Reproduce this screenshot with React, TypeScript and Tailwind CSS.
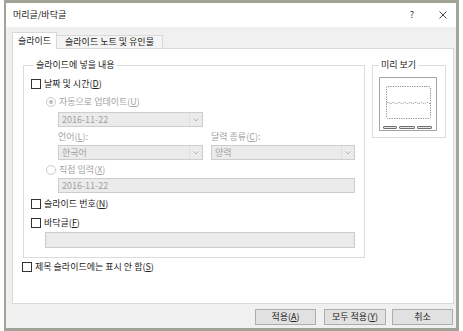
import React from "react";

// 머리글/바닥글 대화상자 (PowerPoint) 재현

function Mn({ k }: { k: string }) {
  return (
    <>
      (<u className="underline underline-offset-[1px]">{k}</u>)
    </>
  );
}

function Check({ label, k }: { label: string; k: string }) {
  return (
    <div className="flex h-[16px] items-center">
      <span className="h-[10px] w-[10px] shrink-0 border border-[#333333] bg-white" />
      <span className="ml-[3px] whitespace-nowrap text-[#222222]">
        {label}
        <Mn k={k} />
      </span>
    </div>
  );
}

function Radio({ label, k, checked }: { label: string; k: string; checked?: boolean }) {
  return (
    <div className="ml-[15px] flex h-[16px] items-center">
      <span className="flex h-[10px] w-[10px] shrink-0 items-center justify-center rounded-full border border-[#cbcbcb] bg-white">
        {checked && <span className="h-[4px] w-[4px] rounded-full bg-[#bdbdbd]" />}
      </span>
      <span className="ml-[3px] whitespace-nowrap text-[#a3a3a3]">
        {label}
        <Mn k={k} />
      </span>
    </div>
  );
}

function Chevron() {
  return (
    <svg width="6" height="4" viewBox="0 0 6 4">
      <path d="M0.5 0.5 L3 3 L5.5 0.5" fill="none" stroke="#b5b5b5" strokeWidth="1" />
    </svg>
  );
}

function Combo({ value, width }: { value: string; width: string }) {
  return (
    <div className={`flex h-[15px] ${width} border border-[#cdcdcd] bg-[#ebebeb] text-[#a3a3a3]`}>
      <span className="flex-1 pl-[3px] leading-[13px]">{value}</span>
      <span className="flex w-[13px] items-center justify-center border-l border-[#dedede]">
        <Chevron />
      </span>
    </div>
  );
}

function Preview() {
  return (
    <svg width="58" height="54" viewBox="0 0 58 54">
      <rect x="0.5" y="0.5" width="57" height="53" fill="#ffffff" stroke="#a5a5a5" />
      <rect
        x="7.5"
        y="9.5"
        width="44"
        height="32"
        rx="1.5"
        fill="none"
        stroke="#8a8a8a"
        strokeDasharray="1.2 1.2"
      />
      <path
        d="M7.5 26 q1.4 -1.2 2.8 0 t2.8 0 t2.8 0 t2.8 0 t2.8 0 t2.8 0 t2.8 0 t2.8 0 t2.8 0 t2.8 0 t2.8 0 t2.8 0 t2.8 0 t2.8 0 t2.8 0 t2.6 0"
        fill="none"
        stroke="#8a8a8a"
        strokeDasharray="1.2 1"
      />
      <rect x="4.5" y="49.5" width="13" height="2" rx="0.5" fill="#e6e6e6" stroke="#6f6f6f" />
      <rect x="20.5" y="49.5" width="15" height="2" rx="0.5" fill="#e6e6e6" stroke="#6f6f6f" />
      <rect x="38.5" y="49.5" width="14" height="2" rx="0.5" fill="#e6e6e6" stroke="#6f6f6f" />
    </svg>
  );
}

export default function App() {
  return (
    <div className="h-[331px] w-[463px] bg-white pl-[4px] font-['Noto_Sans_CJK_KR','Noto_Sans',sans-serif] text-[9px] leading-[12px] text-[#222222]">
      <div className="flex h-[331px] w-[455px] flex-col border-b-[3px] border-l-2 border-r-[3px] border-t-[3px] border-[#a2a498] bg-[#f0f0f0]">
        {/* 제목 표시줄 */}
        <div className="flex h-[24px] items-center bg-white pl-[7px] pr-[9px]">
          <span className="text-[#222222]">머리글/바닥글</span>
          <span className="ml-auto text-[#333333]">?</span>
          <svg className="ml-[25px]" width="8" height="8" viewBox="0 0 8 8">
            <path d="M0.5 0.5 L7.5 7.5 M7.5 0.5 L0.5 7.5" stroke="#333333" strokeWidth="0.9" />
          </svg>
        </div>

        {/* 본문 */}
        <div className="flex flex-1 flex-col pl-[6px] pr-[2px]">
          {/* 탭 */}
          <div className="mt-[5px] flex h-[16px] items-start">
            <div className="relative z-10 flex h-[17px] w-[45px] items-center justify-center border border-b-0 border-[#d9d9d9] bg-white">
              슬라이드
            </div>
            <div className="mt-[3px] flex h-[13px] w-[106px] items-center justify-center border border-b-0 border-l-0 border-[#d9d9d9] bg-[#f4f4f4]">
              슬라이드 노트 및 유인물
            </div>
          </div>

          {/* 탭 패널 */}
          <div className="h-[256px] border border-[#d9d9d9] bg-white pl-[10px]">
            <div className="mt-[10px] flex items-start gap-[7px]">
              <fieldset className="w-[342px] border border-[#dcdcdc] pb-[9px] pl-[7px] pt-[5px]">
                <legend className="ml-[3px] px-[2px] leading-[12px]">슬라이드에 넣을 내용</legend>
                <Check label="날짜 및 시간" k="D" />
                <div className="mt-[2px]">
                  <Radio label="자동으로 업데이트" k="U" checked />
                </div>
                <div className="ml-[27px] mt-[2px]">
                  <Combo value="2016-11-22" width="w-[145px]" />
                </div>
                <div className="ml-[27px] mt-[2px] flex h-[16px] items-center text-[#a3a3a3]">
                  <span className="w-[153px]">
                    언어
                    <Mn k="L" />:
                  </span>
                  <span>
                    달력 종류
                    <Mn k="C" />:
                  </span>
                </div>
                <div className="ml-[27px] flex gap-[8px]">
                  <Combo value="한국어" width="w-[145px]" />
                  <Combo value="양력" width="w-[144px]" />
                </div>
                <div className="mt-[2px]">
                  <Radio label="직접 입력" k="X" />
                </div>
                <div className="ml-[27px] flex h-[15px] w-[297px] items-center border border-[#cdcdcd] bg-[#ebebeb] pl-[3px] text-[#a3a3a3]">
                  2016-11-22
                </div>
                <div className="mt-[3px]">
                  <Check label="슬라이드 번호" k="N" />
                </div>
                <div className="mt-[3px]">
                  <Check label="바닥글" k="F" />
                </div>
                <div className="ml-[14px] mt-[1px] h-[16px] w-[310px] border border-[#cdcdcd] bg-[#ebebeb]" />
              </fieldset>

              <fieldset className="w-[74px] border border-[#dcdcdc] pb-[6px] pl-[6px] pt-[6px]">
                <legend className="px-[2px] leading-[12px]">미리 보기</legend>
                <Preview />
              </fieldset>
            </div>

            <div className="-ml-[1px] mt-[1px]">
              <Check label="제목 슬라이드에는 표시 안 함" k="S" />
            </div>
          </div>

          {/* 단추 */}
          <div className="mt-[5px] flex justify-end pr-[1px]">
            <button className="flex h-[16px] w-[61px] items-center justify-center border border-[#adadad] bg-[#e1e1e1]">
              적용
              <Mn k="A" />
            </button>
            <button className="ml-[8px] flex h-[16px] w-[62px] items-center justify-center border border-[#adadad] bg-[#e1e1e1]">
              모두 적용
              <Mn k="Y" />
            </button>
            <button className="ml-[6px] flex h-[16px] w-[61px] items-center justify-center border border-[#adadad] bg-[#e1e1e1]">
              취소
            </button>
          </div>
        </div>
      </div>
    </div>
  );
}
